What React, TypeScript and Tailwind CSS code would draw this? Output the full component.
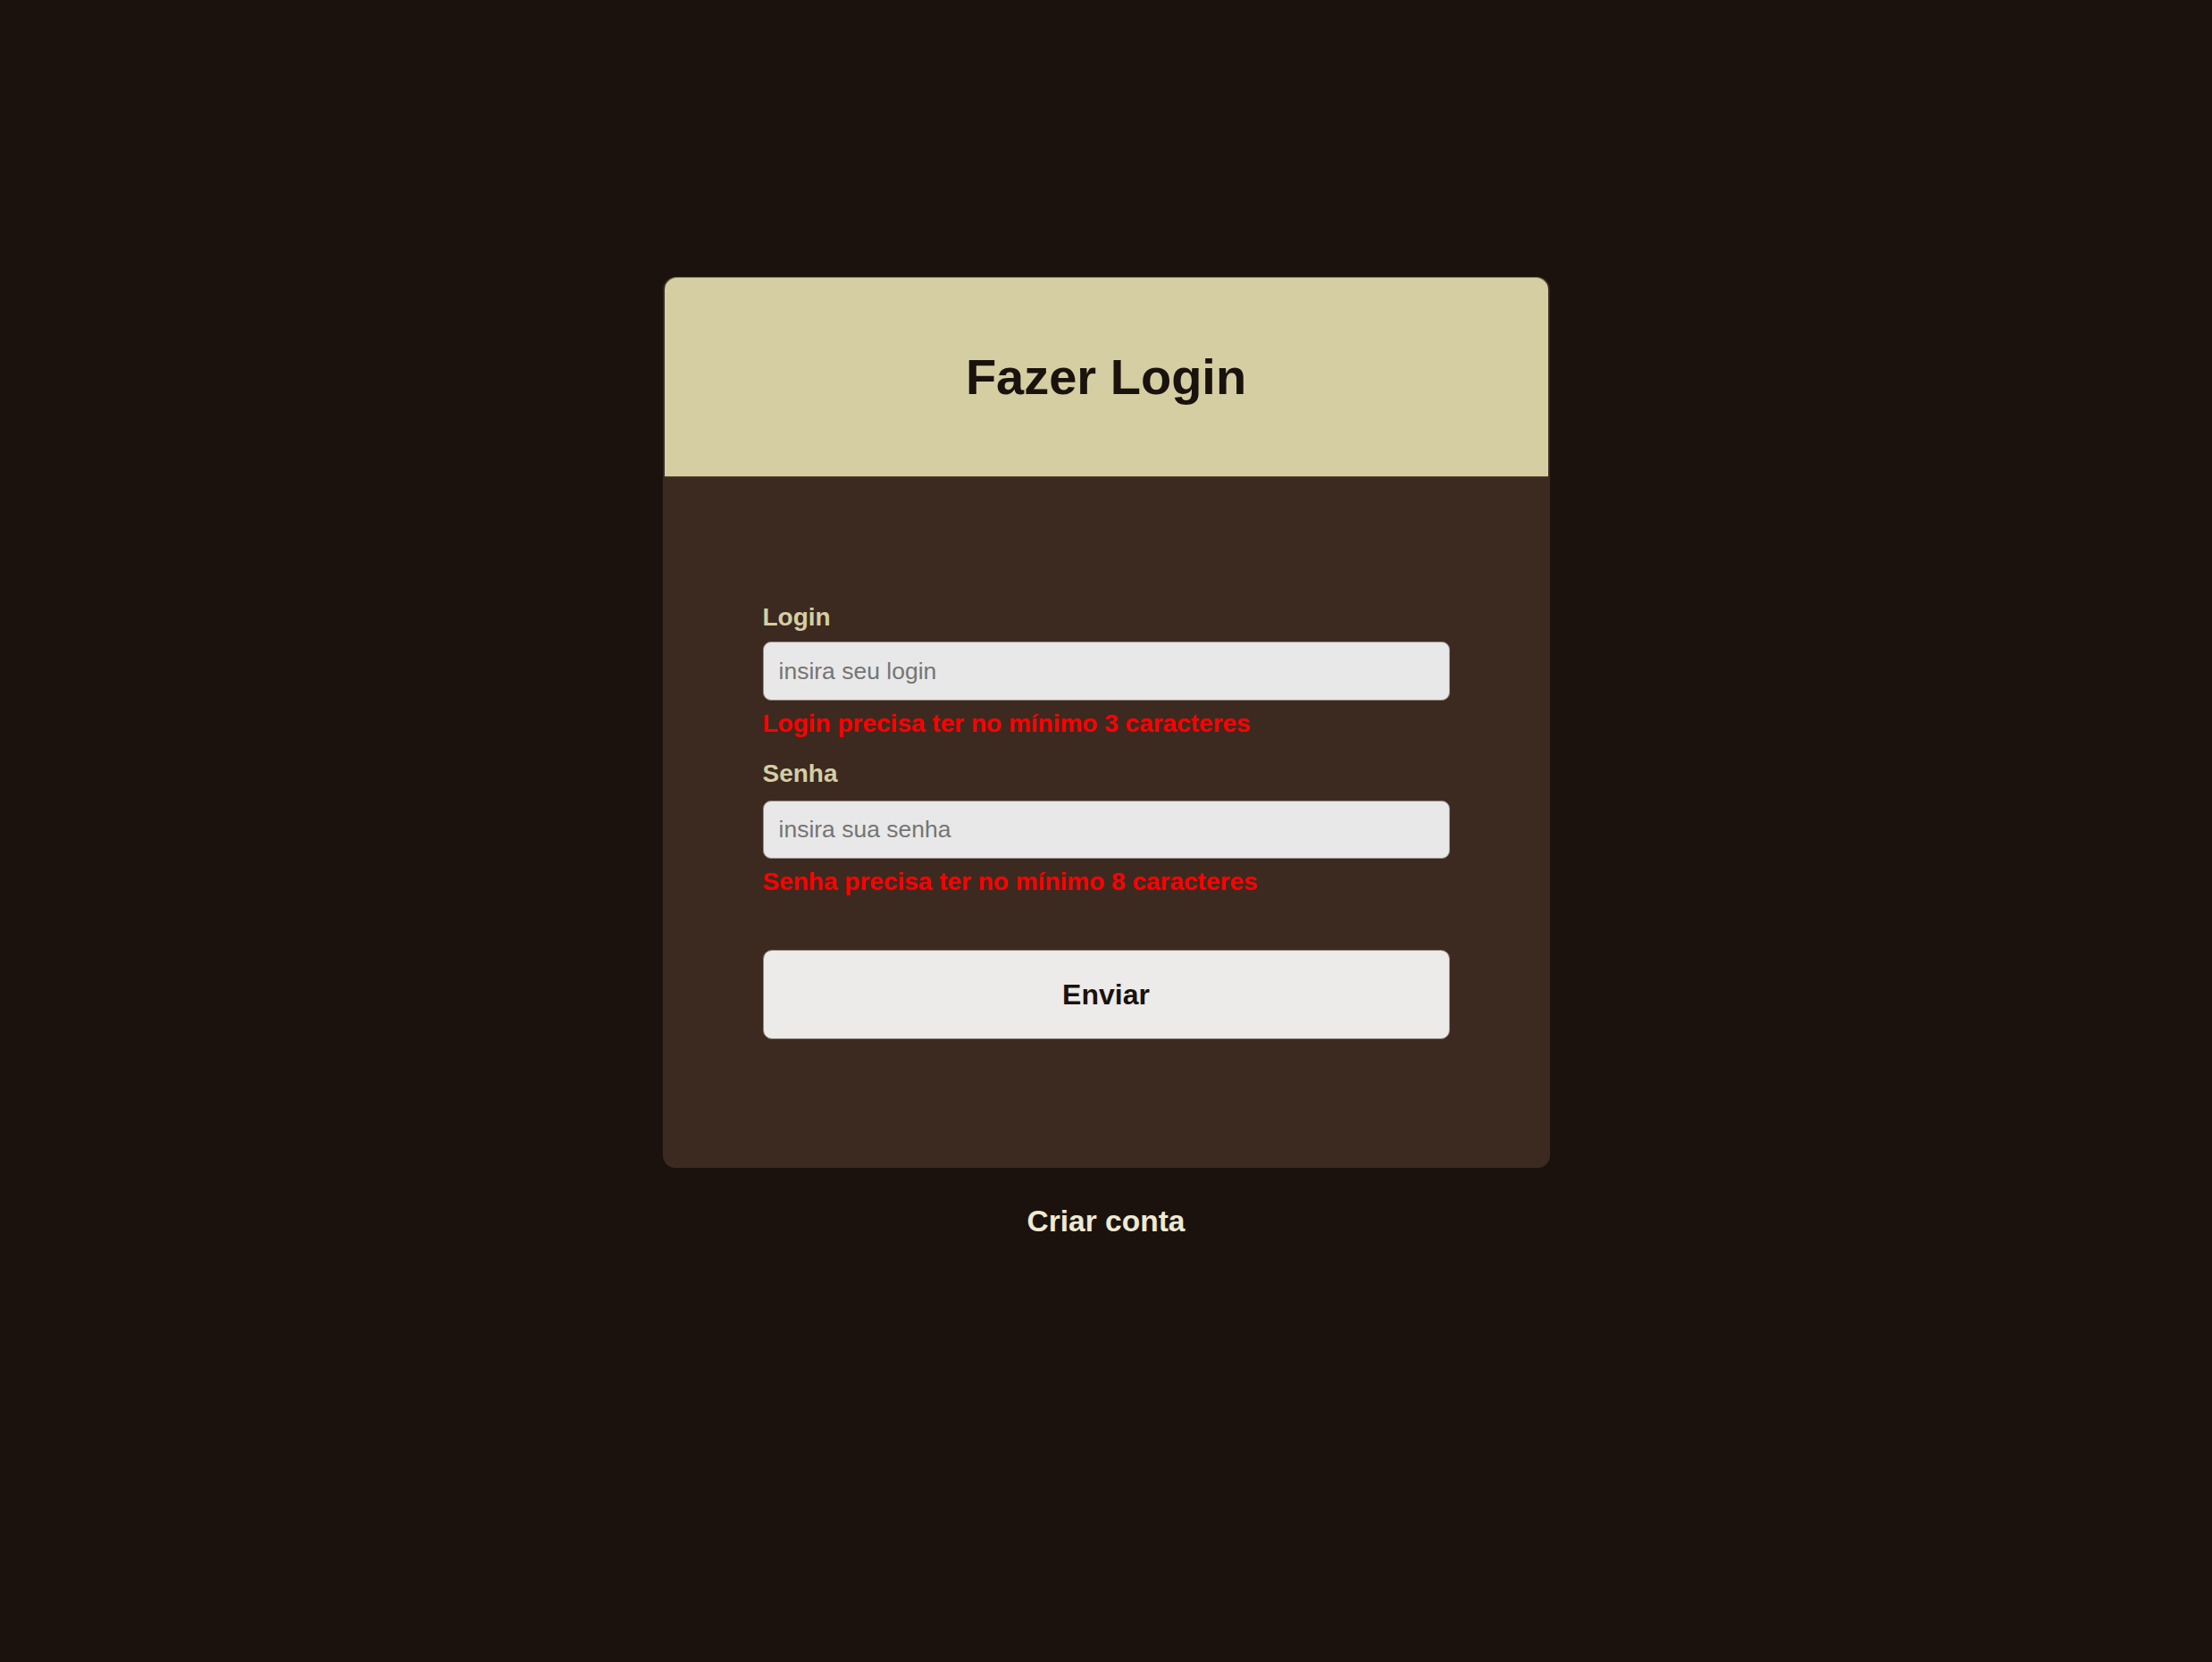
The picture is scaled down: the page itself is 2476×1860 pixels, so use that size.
import React, { useState } from 'react';

const font = { fontFamily: '"Liberation Sans", Arial, sans-serif' };

export default function App() {
  const [login, setLogin] = useState('');
  const [senha, setSenha] = useState('');

  return (
    <div className="min-h-screen w-full bg-[#1b120e] flex flex-col items-center pt-[310px]" style={font}>
      <div className="w-[993px] bg-[#3c2a21] rounded-[14px] flex flex-col">
        {/* header */}
        <div className="mx-[2px] h-[224px] bg-[#d5cea3] rounded-t-[14px] border-t border-[#8a8060] border-b border-b-[#5c4c33] flex items-center justify-center">
          <h1 className="text-[56px] font-bold text-[#1a120d] leading-none">Fazer Login</h1>
        </div>

        {/* body */}
        <form
          className="flex flex-col px-[112px] pt-[141px] pb-[144px]"
          onSubmit={(e) => e.preventDefault()}
        >
          <div className="flex flex-col">
            <label className="text-[28px] leading-[32px] font-bold text-[#d5cea3] mb-[11px]">Login</label>
            <input
              value={login}
              onChange={(e) => setLogin(e.target.value)}
              placeholder="insira seu login"
              className="h-[66px] w-full rounded-[9px] bg-[#e8e8e8] border border-[#9a918c] px-[17px] text-[26.5px] text-[#222] placeholder:text-[#757575] outline-none"
              style={font}
            />
            <span className="mt-[10px] text-[28px] leading-[32px] font-bold text-[#ff0000]">
              Login precisa ter no mínimo 3 caracteres
            </span>
          </div>

          <div className="flex flex-col mt-[24px]">
            <label className="text-[28px] leading-[32px] font-bold text-[#d5cea3] mb-[14px]">Senha</label>
            <input
              type="password"
              value={senha}
              onChange={(e) => setSenha(e.target.value)}
              placeholder="insira sua senha"
              className="h-[65px] w-full rounded-[9px] bg-[#e8e8e8] border border-[#9a918c] px-[17px] text-[26.5px] text-[#222] placeholder:text-[#757575] outline-none"
              style={font}
            />
            <span className="mt-[10px] text-[28px] leading-[32px] font-bold text-[#ff0000]">
              Senha precisa ter no mínimo 8 caracteres
            </span>
          </div>

          <button
            type="submit"
            className="mt-[60px] h-[100px] w-full rounded-[10px] bg-[#edebe9] border border-[#8f8680] text-[32px] font-bold text-[#1a120d]"
            style={font}
          >
            Enviar
          </button>
        </form>
      </div>

      <a href="#" className="mt-[40px] text-[33.5px] leading-[39px] font-bold text-[#efe9d2]">
        Criar conta
      </a>
    </div>
  );
}
